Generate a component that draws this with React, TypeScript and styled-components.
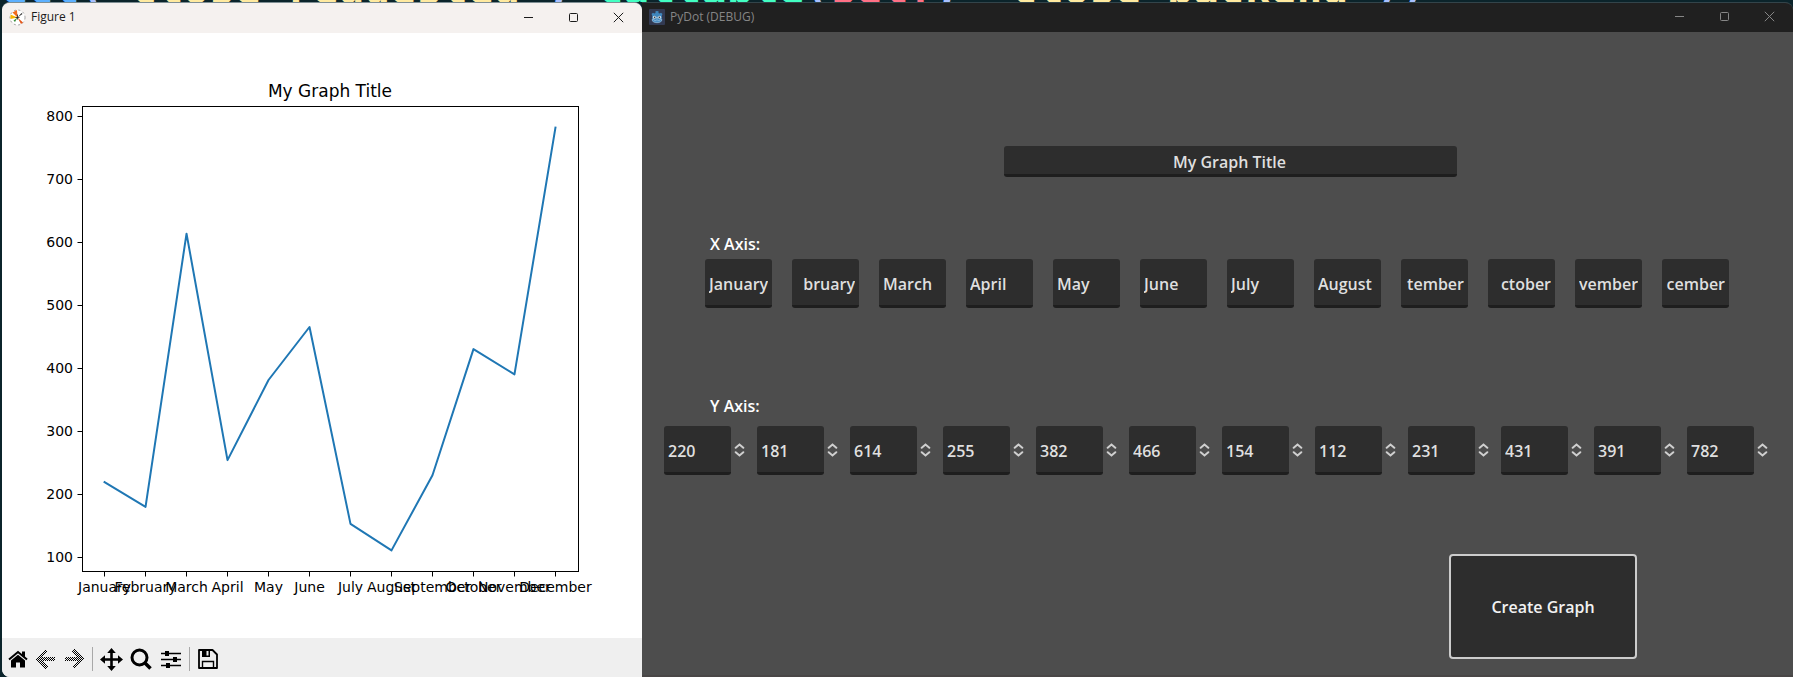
import React, { useState } from 'react';
import styled, { createGlobalStyle } from 'styled-components';

const GlobalStyle = createGlobalStyle`
  *, *::before, *::after { box-sizing: border-box; }
  body { margin: 0; background: #0b242b; font-family: 'Open Sans', 'Noto Sans', sans-serif; }
  button, input { font: inherit; color: inherit; margin: 0; }
`;

const Desktop = styled.div`
  min-height: 100vh;
  display: flex;
  flex-direction: column;
`;

const CodeStrip = styled.div`
  height: 2px;
  padding-left: 2px;
  overflow: hidden;
  display: flex;
  align-items: flex-end;
`;

const CodeLine = styled.code`
  flex: none;
  white-space: pre;
  font: 700 43px/28px 'DejaVu Sans Mono', monospace;
`;

const Token = styled.span<{ $color: string }>`
  color: ${(p) => p.$color};
`;

const Windows = styled.main`
  flex: 1;
  display: grid;
  grid-template-columns: 640fr 1151fr;
  padding-left: 2px;
`;

const Window = styled.section<{ $dark?: boolean }>`
  min-width: 0;
  display: flex;
  flex-direction: column;
  overflow: hidden;
  border-top: 1px solid ${(p) => (p.$dark ? '#33444a' : '#7f8f94')};
  border-radius: ${(p) => (p.$dark ? '0 8px 0 0' : '8px 8px 0 8px')};
  background: ${(p) => (p.$dark ? '#4d4d4d' : '#ffffff')};
`;

const TitleBar = styled.header<{ $dark?: boolean }>`
  height: ${(p) => (p.$dark ? 29 : 30)}px;
  display: flex;
  align-items: center;
  gap: 5px;
  padding: 0 1px 2px 7px;
  background: ${(p) => (p.$dark ? '#202020' : '#f5f1ef')};
  color: ${(p) => (p.$dark ? '#868686' : '#1b1b1b')};
`;

const WindowTitle = styled.h1`
  flex: 1;
  margin: 0;
  font-size: 12px;
  line-height: 16px;
  font-weight: 400;
`;

const CaptionButton = styled.button`
  width: 45px;
  height: 100%;
  padding: 0;
  border: 0;
  background: none;
  display: grid;
  place-items: center;
`;

const CaptionButtons = styled.div`
  height: 100%;
  display: flex;
`;

const Chart = styled.svg`
  display: block;
  width: 100%;
  height: auto;
  font-family: 'DejaVu Sans', sans-serif;
`;

const Toolbar = styled.div`
  flex: 1;
  min-height: 39px;
  display: flex;
  align-items: flex-start;
  padding: 9px 2px 6px;
  background: #efefef;
`;

const ToolButton = styled.button`
  width: 28px;
  height: 24px;
  padding: 0;
  border: 0;
  background: none;
  display: grid;
  place-items: center;
`;

const ToolDivider = styled.span`
  width: 1px;
  height: 24px;
  margin: 0 4px;
  background: #a8a8a8;
`;

const ToolGroup = styled.div<{ $gap: number }>`
  display: flex;
  gap: ${(p) => p.$gap}px;
`;

const Form = styled.form`
  flex: 1;
  padding: 114px 0 16px;
  border-bottom: 2px solid #494646;
  font-size: 16px;
  font-weight: 600;
  line-height: 22px;
`;

const TitleRow = styled.div`
  display: grid;
  grid-template-columns: 362fr 453fr 336fr;
`;

const TextBox = styled.input<{ $align?: 'left' | 'center' | 'right' }>`
  width: 100%;
  min-width: 0;
  height: 49px;
  padding: 3px 4px 0;
  border: 0;
  border-bottom: 3px solid #1e1e1e;
  border-radius: 3px;
  outline: 0;
  background: #2d2d2d;
  color: #dfdfdf;
  text-align: ${(p) => p.$align ?? 'left'};
`;

const TitleBox = styled(TextBox)`
  grid-column: 2;
  height: 31px;
  padding: 4px 6px 0 4px;
`;

const AxisGroup = styled.fieldset<{ $space: number }>`
  min-width: 0;
  margin: 0;
  padding: ${(p) => p.$space}px 0 0;
  border: 0;
`;

const AxisLabel = styled.div<{ $gap: number }>`
  padding: 0 68px ${(p) => p.$gap}px;
  color: #ffffff;
`;

const MonthRow = styled.div`
  display: flex;
  justify-content: space-between;
  padding: 0 64px 0 63px;
`;

const MonthSlot = styled.div`
  flex: 0 1 67px;
  min-width: 0;
`;

const ValueRow = styled.div`
  display: flex;
  justify-content: space-between;
  padding: 0 23px 0 22px;
`;

const SpinBox = styled.div`
  flex: 0 1 83px;
  min-width: 0;
  display: flex;
  align-items: center;
`;

const NumberBox = styled(TextBox)`
  flex: 1;
  appearance: textfield;
  &::-webkit-inner-spin-button,
  &::-webkit-outer-spin-button { appearance: none; margin: 0; }
`;

const Stepper = styled.div`
  flex: none;
  width: 16px;
  display: flex;
  flex-direction: column;
  align-items: center;
  gap: 2px;
  padding-bottom: 2px;
`;

const StepButton = styled.button`
  width: 11px;
  height: 6px;
  padding: 0;
  border: 0;
  background: none;
  display: block;
  svg { display: block; }
`;

const ActionRow = styled.div`
  display: grid;
  grid-template-columns: 807fr 188fr 156fr;
  padding-top: 79px;
`;

const CreateButton = styled.button`
  grid-column: 2;
  height: 105px;
  padding: 0;
  border: 2px solid #cccccc;
  border-radius: 4px;
  background: #2d2d2d;
  color: #f2f2f2;
`;

const MONTHS = ['January', 'February', 'March', 'April', 'May', 'June', 'July', 'August', 'September', 'October', 'November', 'December'];
const VISIBLE_TAIL: Record<string, string> = {
  February: 'bruary',
  September: 'tember',
  October: 'ctober',
  November: 'vember',
  December: 'cember',
};
const VALUES = [220, 181, 614, 255, 382, 466, 154, 112, 231, 431, 391, 782];
const Y_TICKS = [100, 200, 300, 400, 500, 600, 700, 800];

const PLOT = { left: 80.5, right: 576.5, top: 73.5, bottom: 538.5 };

function LineChart({ title, values }: { title: string; values: number[] }) {
  const low = Math.min(...values);
  const high = Math.max(...values);
  const margin = (high - low) * 0.05;
  const plotWidth = PLOT.right - PLOT.left;
  const plotHeight = PLOT.bottom - PLOT.top;
  const count = values.length - 1;
  const x = (i: number) => Math.floor(PLOT.left) + (plotWidth * (i + count * 0.05)) / (count * 1.1);
  const y = (v: number) => PLOT.bottom - (plotHeight * (v - low + margin)) / (high - low + 2 * margin);
  return (
    <Chart viewBox="0 0 640 605" role="img" aria-label={title}>
      <text x="328" y="64" fontSize="17" textAnchor="middle">{title}</text>
      <rect x={PLOT.left} y={PLOT.top} width={plotWidth} height={plotHeight} fill="none" stroke="#000" />
      {Y_TICKS.map((t) => (
        <g key={t}>
          <path d={`M${PLOT.left - 5} ${Math.floor(y(t)) + 0.5}h5`} stroke="#000" />
          <text x="71" y={Math.floor(y(t)) + 5} fontSize="14" textAnchor="end">{t}</text>
        </g>
      ))}
      {MONTHS.map((m, i) => (
        <g key={m}>
          <path d={`M${Math.floor(x(i)) + 0.5} ${PLOT.bottom}v5`} stroke="#000" />
          <text x={x(i)} y="559" fontSize="14" textAnchor="middle">{m}</text>
        </g>
      ))}
      <polyline
        points={values.map((v, i) => `${x(i)},${y(v)}`).join(' ')}
        fill="none"
        stroke="#1f77b4"
        strokeWidth="2"
        strokeLinejoin="round"
        strokeLinecap="square"
      />
    </Chart>
  );
}

function WindowButtons() {
  return (
    <CaptionButtons>
      <CaptionButton aria-label="Minimize">
        <svg width="11" height="11" stroke="currentColor"><path d="M1 5.5h9" /></svg>
      </CaptionButton>
      <CaptionButton aria-label="Maximize">
        <svg width="11" height="11" stroke="currentColor" fill="none"><rect x="1.5" y="1.5" width="8" height="8" rx="1" /></svg>
      </CaptionButton>
      <CaptionButton aria-label="Close">
        <svg width="11" height="11" stroke="currentColor"><path d="M.8.8l9.4 9.4M10.2.8L.8 10.2" /></svg>
      </CaptionButton>
    </CaptionButtons>
  );
}

function MatplotlibIcon() {
  return (
    <svg width="17" height="17" viewBox="0 0 17 17" aria-hidden="true">
      <circle cx="8.500" cy="8.500" r="7.500" fill="#fff" stroke="#888" strokeWidth=".8" strokeDasharray="2 2.500" />
      <path d="M8.500 8.500L3.500 3.500 8 1z" fill="#f26a1b" />
      <path d="M8.500 8.500L1.500 5.500V10z" fill="#f5b400" />
      <path d="M8.500 8.500l4-4.500 1 1z" fill="#333" />
      <path d="M8.500 8.500l5.500 5-2 1.500z" fill="#e2581c" />
      <path d="M8.500 8.500l-2.500 4.500-1.500-1.500z" fill="#3b8f3b" />
      <path d="M8.500 5.500v5M6.500 8.500h4" stroke="#222" strokeWidth=".8" />
    </svg>
  );
}

function GodotIcon() {
  return (
    <svg width="16" height="16" viewBox="0 0 16 16" aria-hidden="true">
      <rect width="16" height="16" rx="1" fill="#323a52" />
      <path d="M2.500 5l1.500-1.300 1.300.8 1.200-.5V2.300L8 2l1.500.3V4l1.200.5L12 3.700 13.500 5l-.7 1.500V11c0 1.700-2.300 2.700-4.800 2.700S3.200 12.700 3.200 11V6.500z" fill="#3f86bd" />
      <path d="M3.200 10.200l2 .4.300 1h1.600l.2-.8h1.400l.2.800h1.600l.3-1 2-.4V11c0 1.700-2.300 2.700-4.800 2.700S3.200 12.700 3.200 11z" fill="#4a8fc4" stroke="#b9d3e6" strokeWidth=".5" />
      <circle cx="5.400" cy="8.300" r="1.500" fill="#dde8f0" />
      <circle cx="10.600" cy="8.300" r="1.500" fill="#dde8f0" />
      <circle cx="5.600" cy="8.400" r=".8" fill="#39414f" />
      <circle cx="10.400" cy="8.400" r=".8" fill="#39414f" />
      <path d="M8 7.800v1.700" stroke="#dde8f0" />
    </svg>
  );
}

function HomeIcon() {
  return (
    <svg width="20" height="18" viewBox="0 0 20 18" aria-hidden="true">
      <path d="M1 9.600L10 2l9 7.600" fill="none" stroke="#000" strokeWidth="2" />
      <path d="M14 1.500h3v6l-3-2.600z" />
      <path d="M10 4.700l7 5.900V17.500h-5v-5H8v5H3v-6.900z" />
    </svg>
  );
}

function ArrowIcon({ back }: { back?: boolean }) {
  const id = back ? 'dither-back' : 'dither-forward';
  return (
    <svg width="20" height="20" viewBox="0 0 20 20" shapeRendering="crispEdges" aria-hidden="true">
      <defs>
        <pattern id={id} width="2" height="2" patternUnits="userSpaceOnUse">
          <path d="M0 0h1v1H0zM1 1h1v1H1z" />
        </pattern>
      </defs>
      <path
        d={
          back
            ? 'M0 10L9.500 0l2.500 2.500L6.500 8H19v4H6.500l5.500 5.500L9.500 20z'
            : 'M20 10L10.500 0 8 2.500 13.500 8H1v4h12.500L8 17.500l2.500 2.500z'
        }
        fill={`url(#${id})`}
      />
    </svg>
  );
}

function PanIcon() {
  return (
    <svg width="23" height="23" viewBox="0 0 23 23" aria-hidden="true">
      <path d="M11.500 3v17M3 11.500h17" stroke="#000" strokeWidth="2.600" />
      <path d="M11.500 0l4.300 5H7.200zM11.500 23l4.300-5H7.200zM0 11.500l5-4.300v8.600zM23 11.500l-5-4.300v8.600z" />
    </svg>
  );
}

function ZoomIcon() {
  return (
    <svg width="22" height="22" viewBox="0 0 22 22" fill="none" stroke="#000" aria-hidden="true">
      <circle cx="9.500" cy="9.500" r="7.500" strokeWidth="3" />
      <path d="M14.500 14.500l6 6" strokeWidth="3.600" />
    </svg>
  );
}

function SlidersIcon() {
  return (
    <svg width="20" height="19" viewBox="0 0 20 19" aria-hidden="true">
      <path d="M0 3.500h20M0 9.500h20M0 15.500h20" stroke="#000" strokeWidth="1.600" />
      <path d="M4 1h4v5H4zM12 7h4v5h-4zM5 13h4v5H5z" />
    </svg>
  );
}

function SaveIcon() {
  return (
    <svg width="20" height="20" viewBox="0 0 20 20" aria-hidden="true">
      <path d="M1 1h13.500L19 5.500V19H1z" fill="none" stroke="#000" strokeWidth="1.800" strokeLinejoin="round" />
      <path d="M4 1h8v7H4z" />
      <path d="M8.500 2h2v4.500h-2z" fill="#efefef" />
      <path d="M4.500 19v-6.500h11V19" fill="none" stroke="#000" strokeWidth="1.400" />
    </svg>
  );
}

function Chevron({ down }: { down?: boolean }) {
  return (
    <svg width="11" height="6" fill="none" stroke="#cfcfcf" strokeWidth="2" strokeLinecap="round" aria-hidden="true">
      <path d={down ? 'M1.700 1.200l3.800 3.300 3.800-3.300' : 'M1.700 4.800l3.800-3.300 3.800 3.300'} />
    </svg>
  );
}

export default function App() {
  const [title, setTitle] = useState('My Graph Title');
  const [names, setNames] = useState(MONTHS.map((m) => VISIBLE_TAIL[m] ?? m));
  const [values, setValues] = useState(VALUES);
  const [figure, setFigure] = useState({ title, values });
  const setValue = (i: number, v: number) => setValues(values.map((old, k) => (k === i ? v : old)));

  return (
    <>
      <GlobalStyle />
      <Desktop>
        <CodeStrip aria-hidden="true">
          <CodeLine>
            <Token $color="#5cb0ff">ect</Token>
            <Token $color="#a8c0ff">(</Token>
            <Token $color="#ffeaa0">"close_requested"</Token>
            <Token $color="#a8c0ff">, </Token>
            <Token $color="#42ffc2">Callable</Token>
            <Token $color="#a8c0ff">(</Token>
            <Token $color="#ff7085">self</Token>
            <Token $color="#a8c0ff">, </Token>
            <Token $color="#ffeaa0">"close_backend"</Token>
            <Token $color="#a8c0ff">))</Token>
          </CodeLine>
        </CodeStrip>
        <Windows>
          <Window>
            <TitleBar>
              <MatplotlibIcon />
              <WindowTitle>Figure 1</WindowTitle>
              <WindowButtons />
            </TitleBar>
            <LineChart title={figure.title} values={figure.values} />
            <Toolbar>
              <ToolGroup $gap={0}>
                <ToolButton aria-label="Home"><HomeIcon /></ToolButton>
                <ToolButton aria-label="Back" disabled><ArrowIcon back /></ToolButton>
                <ToolButton aria-label="Forward" disabled><ArrowIcon /></ToolButton>
              </ToolGroup>
              <ToolDivider />
              <ToolGroup $gap={2}>
                <ToolButton aria-label="Pan"><PanIcon /></ToolButton>
                <ToolButton aria-label="Zoom"><ZoomIcon /></ToolButton>
                <ToolButton aria-label="Configure subplots"><SlidersIcon /></ToolButton>
              </ToolGroup>
              <ToolDivider />
              <ToolButton aria-label="Save"><SaveIcon /></ToolButton>
            </Toolbar>
          </Window>
          <Window $dark>
            <TitleBar $dark>
              <GodotIcon />
              <WindowTitle>PyDot (DEBUG)</WindowTitle>
              <WindowButtons />
            </TitleBar>
            <Form
              onSubmit={(e) => {
                e.preventDefault();
                setFigure({ title, values });
              }}
            >
              <TitleRow>
                <TitleBox $align="center" aria-label="Graph title" value={title} onChange={(e) => setTitle(e.target.value)} />
              </TitleRow>
              <AxisGroup $space={56} aria-labelledby="x-axis">
                <AxisLabel $gap={4} id="x-axis">X Axis:</AxisLabel>
                <MonthRow>
                  {names.map((name, i) => (
                    <MonthSlot key={MONTHS[i]}>
                      <TextBox
                        aria-label={`Label ${i + 1}`}
                        $align={MONTHS[i] in VISIBLE_TAIL ? 'right' : 'left'}
                        value={name}
                        onChange={(e) => setNames(names.map((old, k) => (k === i ? e.target.value : old)))}
                      />
                    </MonthSlot>
                  ))}
                </MonthRow>
              </AxisGroup>
              <AxisGroup $space={87} aria-labelledby="y-axis">
                <AxisLabel $gap={9} id="y-axis">Y Axis:</AxisLabel>
                <ValueRow>
                  {values.map((value, i) => (
                    <SpinBox key={MONTHS[i]}>
                      <NumberBox
                        type="number"
                        aria-label={`Value ${i + 1}`}
                        value={value}
                        onChange={(e) => setValue(i, Number(e.target.value))}
                      />
                      <Stepper>
                        <StepButton type="button" aria-label="Increase" onClick={() => setValue(i, value + 1)}>
                          <Chevron />
                        </StepButton>
                        <StepButton type="button" aria-label="Decrease" onClick={() => setValue(i, value - 1)}>
                          <Chevron down />
                        </StepButton>
                      </Stepper>
                    </SpinBox>
                  ))}
                </ValueRow>
              </AxisGroup>
              <ActionRow>
                <CreateButton type="submit">Create Graph</CreateButton>
              </ActionRow>
            </Form>
          </Window>
        </Windows>
      </Desktop>
    </>
  );
}
